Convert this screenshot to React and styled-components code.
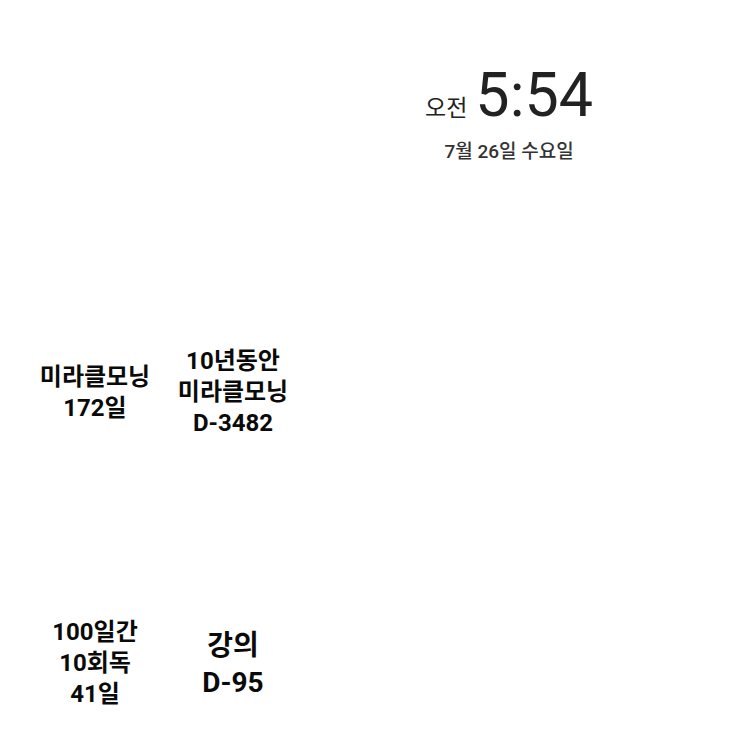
import React from 'react';
import styled, { createGlobalStyle } from 'styled-components';

const GlobalStyle = createGlobalStyle`
  html, body {
    margin: 0;
    padding: 0;
    background: #ffffff;
  }
  body {
    font-family: Roboto, "Noto Sans CJK KR", sans-serif;
  }
`;

const Screen = styled.div`
  width: 743px;
  height: 745px;
  box-sizing: border-box;
  padding: 0 26px;
  display: grid;
  grid-template-columns: repeat(5, 138px);
  grid-template-rows: 257px 271px 271px;
  overflow: hidden;
  background: #ffffff;
`;

const ClockWidget = styled.div`
  grid-column: 3 / 6;
  grid-row: 1;
  display: flex;
  flex-direction: column;
  align-items: center;
  padding-top: 65px;
  color: #222222;
`;

const TimeRow = styled.div`
  display: flex;
  align-items: baseline;
  gap: 8px;
`;

const Meridiem = styled.span`
  font-size: 23px;
  line-height: 1;
`;

const Time = styled.span`
  font-size: 61px;
  line-height: 1;
  font-weight: 400;
  font-family: Roboto, sans-serif;
`;

const DateLine = styled.div`
  margin-top: 10px;
  font-size: 19px;
  font-weight: 500;
  color: #333333;
`;

const DdayWidget = styled.div`
  grid-column: ${({ $col }) => $col};
  grid-row: ${({ $row }) => $row};
  display: flex;
  align-items: center;
  justify-content: center;
  text-align: center;
  font-size: ${({ $big }) => ($big ? '28px' : '24px')};
  line-height: ${({ $big }) => ($big ? '37px' : '31px')};
  font-weight: 700;
  color: #0a0a0a;
`;

const widgets = [
  { col: 1, row: 2, lines: ['미라클모닝', '172일'] },
  { col: 2, row: 2, lines: ['10년동안', '미라클모닝', 'D-3482'] },
  { col: 1, row: 3, lines: ['100일간', '10회독', '41일'] },
  { col: 2, row: 3, lines: ['강의', 'D-95'], big: true },
];

const App = () => (
  <>
    <GlobalStyle />
    <Screen>
      <ClockWidget>
        <TimeRow>
          <Meridiem>오전</Meridiem>
          <Time>5:54</Time>
        </TimeRow>
        <DateLine>7월 26일 수요일</DateLine>
      </ClockWidget>
      {widgets.map((w) => (
        <DdayWidget
          key={w.lines.join('-')}
          $col={w.col}
          $row={w.row}
          $big={w.big}
        >
          <div>
            {w.lines.map((line) => (
              <div key={line}>{line}</div>
            ))}
          </div>
        </DdayWidget>
      ))}
    </Screen>
  </>
);

export default App;
